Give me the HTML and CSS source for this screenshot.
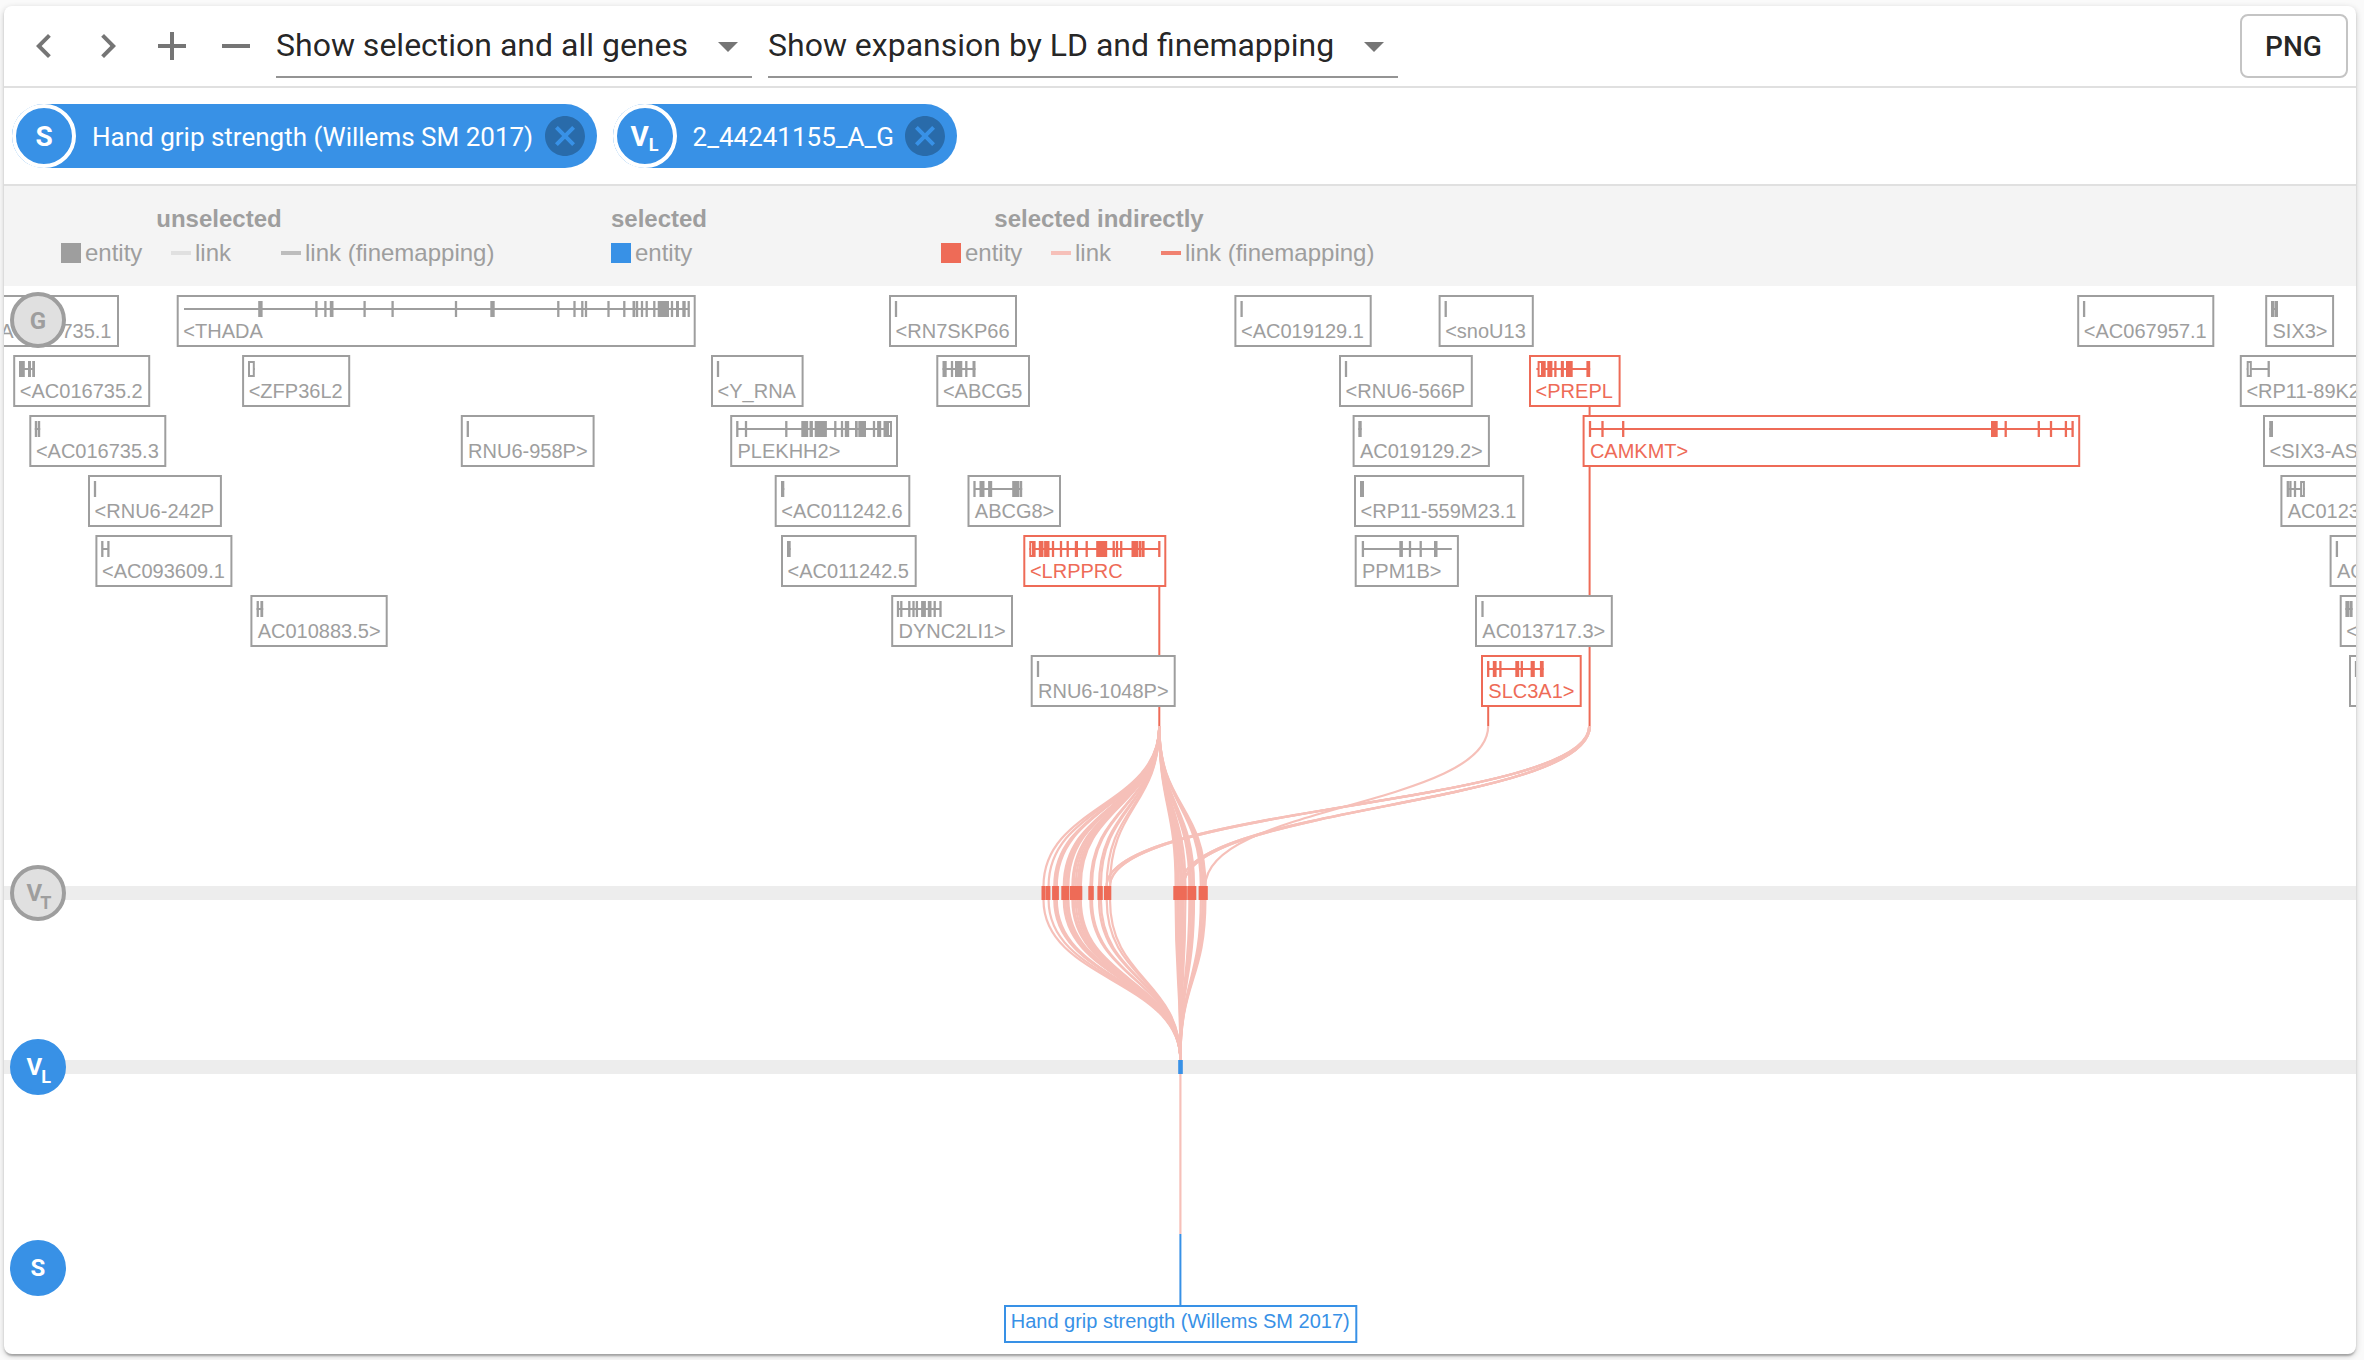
FILE: index.html
```html
<!DOCTYPE html>
<html lang="en">
<head>
<meta charset="utf-8">
<title>Locus browser</title>
<link rel="stylesheet" href="styles.css">
</head>
<body>
<main class="card">
  <header class="toolbar">
    <button class="icon-button" aria-label="Pan left"><svg viewBox="0 0 24 24"><path d="M15.41 7.41 14 6l-6 6 6 6 1.41-1.41L10.83 12z"/></svg></button>
    <button class="icon-button" aria-label="Pan right"><svg viewBox="0 0 24 24"><path d="M10 6 8.59 7.41 13.17 12l-4.58 4.59L10 18l6-6z"/></svg></button>
    <button class="icon-button" aria-label="Zoom in"><svg viewBox="0 0 24 24"><path d="M19 13h-6v6h-2v-6H5v-2h6V5h2v6h6v2z"/></svg></button>
    <button class="icon-button" aria-label="Zoom out"><svg viewBox="0 0 24 24"><path d="M19 13H5v-2h14v2z"/></svg></button>
    <div class="select select-genes"><span>Show selection and all genes</span><svg viewBox="0 0 24 24"><path d="M7 10l5 5 5-5z"/></svg></div>
    <div class="select select-expansion"><span>Show expansion by LD and finemapping</span><svg viewBox="0 0 24 24"><path d="M7 10l5 5 5-5z"/></svg></div>
    <button class="png-button">PNG</button>
  </header>
  <section class="chips">
    <div class="chip">
      <span class="avatar">S</span>
      <span class="chip-label">Hand grip strength (Willems SM 2017)</span>
      <svg class="chip-delete" viewBox="0 0 24 24"><path d="M12 2C6.47 2 2 6.47 2 12s4.47 10 10 10 10-4.47 10-10S17.53 2 12 2zm5 13.59L15.59 17 12 13.41 8.41 17 7 15.59 10.59 12 7 8.41 8.41 7 12 10.59 15.59 7 17 8.41 13.41 12 17 15.59z"/></svg>
    </div>
    <div class="chip">
      <span class="avatar">V<sub>L</sub></span>
      <span class="chip-label">2_44241155_A_G</span>
      <svg class="chip-delete" viewBox="0 0 24 24"><path d="M12 2C6.47 2 2 6.47 2 12s4.47 10 10 10 10-4.47 10-10S17.53 2 12 2zm5 13.59L15.59 17 12 13.41 8.41 17 7 15.59 10.59 12 7 8.41 8.41 7 12 10.59 15.59 7 17 8.41 13.41 12 17 15.59z"/></svg>
    </div>
  </section>
  <section class="legend">
    <div class="legend-group group-unselected">
      <h2>unselected</h2>
      <ul>
        <li><i class="box grey"></i>entity</li>
        <li><i class="dash grey-light"></i>link</li>
        <li><i class="dash grey-mid"></i>link (finemapping)</li>
      </ul>
    </div>
    <div class="legend-group group-selected">
      <h2>selected</h2>
      <ul>
        <li><i class="box blue"></i>entity</li>
      </ul>
    </div>
    <div class="legend-group group-indirect">
      <h2>selected indirectly</h2>
      <ul>
        <li><i class="box red"></i>entity</li>
        <li><i class="dash red-light"></i>link</li>
        <li><i class="dash red-mid"></i>link (finemapping)</li>
      </ul>
    </div>
  </section>
  <svg class="browser" viewBox="4 286 2352 1068">
    <g id="connectors" class="connectors"></g>
    <g id="genes"></g>
    <rect class="track" x="4" y="886" width="2352" height="14"/>
    <rect class="track" x="4" y="1060" width="2352" height="14"/>
    <g id="links" class="links"></g>
    <g id="variants" class="variants"></g>
    <rect class="lead" x="1178.2" y="1060" width="4.6" height="14"/>
    <line class="study-link" x1="1180.4" y1="1074" x2="1180.4" y2="1234"/>
    <line class="study-stem" x1="1180.4" y1="1234" x2="1180.4" y2="1306"/>
    <rect class="study-box" x="1005" y="1306" width="351.3" height="36"/>
    <text class="study-label" x="1010.7" y="1328">Hand grip strength (Willems SM 2017)</text>
    <g class="badge muted"><circle cx="38" cy="320" r="26"/><text x="38" y="328.5">G</text></g>
    <g class="badge muted"><circle cx="38" cy="893" r="26"/><text x="34.3" y="901">V</text><text class="sub" x="45.8" y="909">T</text></g>
    <g class="badge active"><circle cx="38" cy="1067" r="26"/><text x="34.3" y="1075">V</text><text class="sub" x="46" y="1083">L</text></g>
    <g class="badge active"><circle cx="38" cy="1268" r="26"/><text x="38" y="1276">S</text></g>
  </svg>
</main>
<script src="script.js"></script>
</body>
</html>
```
FILE: styles.css
```css
* { box-sizing: border-box; }

body {
  margin: 0;
  padding: 6px 8px 6px 4px;
  background: #fafafa;
  font-family: Roboto, sans-serif;
  overflow: hidden;
}

.card {
  height: 1348px;
  border-radius: 8px;
  background: #fff;
  overflow: hidden;
  box-shadow: 0 2px 6px rgba(0, 0, 0, .2), 0 2px 2px rgba(0, 0, 0, .14), 0 4px 2px -2px rgba(0, 0, 0, .12);
}

.toolbar {
  display: flex;
  align-items: center;
  height: 82px;
  padding: 0 8px;
  border-bottom: 2px solid #e0e0e0;
}

.icon-button {
  width: 64px;
  height: 64px;
  padding: 8px;
  border: 0;
  background: none;
}

.icon-button svg {
  display: block;
  width: 48px;
  height: 48px;
  fill: #757575;
}

.select {
  display: flex;
  justify-content: space-between;
  align-items: center;
  height: 64px;
  margin-right: 16px;
  border-bottom: 2px solid #949494;
  color: rgba(0, 0, 0, .87);
  font-size: 32px;
  line-height: 62px;
  white-space: nowrap;
}

.select-genes { width: 476px; margin-left: 8px; }
.select-expansion { width: 630px; }

.select svg {
  width: 48px;
  height: 48px;
  margin-top: 2px;
  fill: #757575;
}

.png-button {
  width: 108px;
  height: 64px;
  margin-left: auto;
  padding: 0 1px 0 0;
  border: 2px solid #c4c4c4;
  border-radius: 8px;
  background: #fff;
  color: rgba(0, 0, 0, .87);
  font: 500 28px Roboto, sans-serif;
}

.chips {
  display: flex;
  align-items: center;
  gap: 16px;
  height: 98px;
  padding: 0 8px;
  border-bottom: 2px solid #e0e0e0;
}

.chip {
  display: flex;
  align-items: center;
  height: 64px;
  padding-right: 8px;
  border-radius: 32px;
  background: #3891e6;
  color: #fff;
}

.avatar {
  display: flex;
  align-items: center;
  justify-content: center;
  width: 64px;
  height: 64px;
  border: 4px solid #fff;
  border-radius: 50%;
  font-size: 28px;
  font-weight: 700;
}

.avatar sub {
  margin-top: 16px;
  font-size: 18px;
  font-weight: 700;
  vertical-align: baseline;
}

.chip-label {
  margin: 1px 7.4px 0 16px;
  font-size: 26px;
  line-height: 32px;
  white-space: nowrap;
}

.chip-delete {
  width: 48px;
  height: 48px;
  fill: rgba(0, 0, 0, .26);
}

.legend {
  display: flex;
  height: 100px;
  padding: 18px 0 0 56px;
  background: #f4f4f4;
  color: #9e9e9e;
  font-family: "Liberation Sans", sans-serif;
  font-size: 24px;
}

.legend h2 {
  margin: 0;
  font-size: 24px;
  line-height: 30px;
  text-align: center;
  white-space: nowrap;
}

.legend-group { margin-right: 116px; }
.legend-group ul {
  display: flex;
  margin: 4px 0 0;
  padding: 0;
  list-style: none;
}
.legend-group li {
  display: flex;
  align-items: center;
  width: 110px;
  line-height: 30px;
  white-space: nowrap;
}
.group-unselected { width: 434px; }
.group-unselected h2 { width: 318px; }
.group-selected { width: 214px; }
.group-selected h2 { width: 98px; }
.group-indirect h2 { width: 318px; }

.box {
  flex: none;
  width: 20px;
  height: 20px;
  margin: 0 4.5px 0 .5px;
}
.dash {
  flex: none;
  width: 20px;
  height: 4px;
  margin: 0 4.5px 0 .5px;
}
.grey { background: #9e9e9e; }
.grey-light { background: #e0e0e0; }
.grey-mid { background: #bdbdbd; }
.blue { background: #3891e6; }
.red { background: #ee6b57; }
.red-light { background: #f6c0b9; }
.red-mid { background: #f08170; }

.browser {
  display: block;
  width: 2352px;
  height: 1068px;
  font-family: "Liberation Sans", sans-serif;
  font-size: 20px;
}

.gene .frame { fill: #fff; stroke-width: 2; }
.gene .intron { stroke-width: 2; }
.gene .hollow { fill: #fff; stroke-width: 2; }
.gene.normal .frame, .gene.normal .intron, .gene.normal .hollow { stroke: #9e9e9e; }
.gene.normal text, .gene.normal .exon { fill: #9e9e9e; }
.gene.linked .frame, .gene.linked .intron, .gene.linked .hollow { stroke: #ee6b57; }
.gene.linked text, .gene.linked .exon { fill: #ee6b57; }

.connectors line { stroke: #ee6b57; stroke-width: 2; }
.links path { fill: none; stroke: #f6c0b9; stroke-width: 2.2; }
.track { fill: #ededed; }
.variants rect { fill: #ee6b57; }
.lead { fill: #3891e6; }
.study-link { stroke: #f6c0b9; stroke-width: 2.2; }
.study-stem { stroke: #3891e6; stroke-width: 2; }
.study-box { fill: #fff; stroke: #3891e6; stroke-width: 2; }
.study-label { fill: #3891e6; }

.badge circle { stroke-width: 4; }
.badge text {
  font: 700 24px Roboto, sans-serif;
  text-anchor: middle;
}
.badge .sub { font-size: 18px; }
.muted circle { fill: #e0e0e0; stroke: #9e9e9e; }
.muted text { fill: #9e9e9e; }
.active circle { fill: #3891e6; stroke: #3891e6; }
.active text { fill: #fff; }
```
FILE: script.js
```js
// Each gene: row, left, right, label, exons, linked, intron start/end overrides.
// An exon is a number (thin exon centre), [start, end] (solid block)
// or [start, end, 1] (untranslated block, drawn as an outline).
const genes = [
  [0, -17, 118, '<AC016735.1', []],
  [0, 177.7, 694.7, '<THADA', [[258.2, 262.6], 316.4, 325.4, [329.8, 333.5], 364.6, 392.6, 456, [490.3, 494.7], 558.3, 574.5, 582.3, 586, 608.5, 624.3, [632.5, 635], [635.6, 638.2], 642, 646.7, 654.3, [657.7, 669], 672, [676, 679], [682.3, 685.7], 688.7], false, 184],
  [0, 890, 1016, '<RN7SKP66', [896]],
  [0, 1235.4, 1370.7, '<AC019129.1', [1241.6]],
  [0, 1439.6, 1532.8, '<snoU13', [1445.7]],
  [0, 2078.2, 2213.3, '<AC067957.1', [2084.1]],
  [0, 2266.2, 2333.1, 'SIX3>', [[2271, 2274.6], [2275, 2278]]],
  [1, 14.2, 149.2, '<AC016735.2', [[19, 24.8], [28, 31], [32.2, 35]]],
  [1, 243.1, 349.2, '<ZFP36L2', [[248, 254.8, 1]]],
  [1, 712, 802.6, '<Y_RNA', [718]],
  [1, 937.3, 1029, '<ABCG5', [[942.5, 946.7], 952, [955, 962.3], 966.3, [972.5, 975.5]]],
  [1, 1340, 1471.8, '<RNU6-566P', [1346]],
  [1, 1530, 1619.6, '<PREPL', [[1537.6, 1543, 1], [1541.8, 1545.7], [1547.3, 1552.4], 1555.4, [1560.8, 1563.9], [1566, 1572.7], [1586.4, 1590.2]], true, 1536.4],
  [1, 2240.8, 2420, '<RP11-89K21.1', [[2246.7, 2251.8, 1], 2268.7]],
  [2, 30.3, 165.3, '<AC016735.3', [[34.8, 37.2], [37.8, 40.2]]],
  [2, 461.8, 593.6, 'RNU6-958P>', [467.8]],
  [2, 731.2, 897, 'PLEKHH2>', [737.3, 746, 786.3, [801.3, 808.2], [809.5, 812.9], [814.7, 826.9], 835.3, 842, [844.8, 849.2], [855, 857.7], [858.3, 866], 874, [877.1, 881.2], [883.5, 888], [887, 892, 1]]],
  [2, 1353.6, 1488.9, 'AC019129.2>', [[1358.3, 1361.7]]],
  [2, 1583.6, 2079.2, 'CAMKMT>', [1590, 1602.5, 1623.2, [1991, 1997.7], 2005.7, 2038.8, 2051, 2065.9, 2072.6], true],
  [2, 2264, 2400, '<SIX3-AS1', [[2269.2, 2273]]],
  [3, 89, 220.9, '<RNU6-242P', [95]],
  [3, 775.7, 909.3, '<AC011242.6', [[781, 784.3]]],
  [3, 968.5, 1060, 'ABCG8>', [974.5, [979.5, 984.5], [988.1, 992.2], [1012.2, 1019.2], [1019.6, 1022.2]]],
  [3, 1355, 1523.2, '<RP11-559M23.1', [[1360, 1364]]],
  [3, 2281.4, 2420, 'AC012354.6>', [2287.8, 2290.4, 2295, [2300.1, 2304.9, 1]]],
  [4, 96.4, 231.4, '<AC093609.1', [102.3, 108.4]],
  [4, 782, 915.7, '<AC011242.5', [[787, 790.7]]],
  [4, 1024.3, 1165.3, '<LRPPRC', [[1029.3, 1034, 1], [1032.6, 1035.6], [1038.8, 1043.5], [1044.1, 1049.5], 1053, 1061, 1067.7, [1074.8, 1078], 1086.7, [1096.2, 1107.2], 1113.7, 1117, 1121.2, [1131.5, 1138.4], [1138.9, 1141.6], [1142, 1144.6], 1159.3], true],
  [4, 1355.7, 1457.9, 'PPM1B>', [1362.9, [1399.3, 1402.9], 1410, 1420.7, [1434, 1437.5]], false, 1362.5, 1451.8],
  [4, 2330.6, 2460, 'AC012354.8>', [2336.9]],
  [5, 251.4, 386.7, 'AC010883.5>', [[256.6, 258.9], [260.4, 263.2]]],
  [5, 892.2, 1012, 'DYNC2LI1>', [898, 901.3, 909.3, 913.5, 916.9, [921.1, 925.9], [927.8, 931.5], 934.7, 940.5]],
  [5, 1476, 1611.8, 'AC013717.3>', [1482.5]],
  [5, 2340.7, 2460, '<SIX2', [[2345.4, 2349], [2349.4, 2352.6]]],
  [6, 1031.7, 1174.7, 'RNU6-1048P>', [1038]],
  [6, 1482, 1580.7, 'SLC3A1>', [1488.2, [1492.8, 1496.6], 1500.4, [1515.3, 1519.2], 1521.8, [1530.6, 1534.8], [1539.9, 1543.7]], true],
  [6, 2350, 2480, '', [2356]]
];

const NS = 'http://www.w3.org/2000/svg';
function add(parent, tag, attrs, text) {
  const el = document.createElementNS(NS, tag);
  for (const key in attrs) el.setAttribute(key, attrs[key]);
  if (text) el.textContent = text;
  parent.appendChild(el);
  return el;
}

const geneLayer = document.getElementById('genes');
for (const [row, left, right, label, exons, linked, start, end] of genes) {
  const y = 296 + row * 60;
  const g = add(geneLayer, 'g', { class: 'gene ' + (linked ? 'linked' : 'normal') });
  add(g, 'rect', { class: 'frame', x: left, y, width: right - left, height: 50 });
  const edges = exons.flatMap(e => Array.isArray(e) ? e.slice(0, 2) : [e]);
  if (edges.length > 1) {
    add(g, 'line', { class: 'intron', x1: start || Math.min(...edges), x2: end || Math.max(...edges), y1: y + 13, y2: y + 13 });
  }
  for (const e of exons) {
    if (!Array.isArray(e)) {
      add(g, 'rect', { class: 'exon', x: e - 1.15, y: y + 5, width: 2.3, height: 16 });
    } else if (e[2]) {
      add(g, 'rect', { class: 'hollow', x: e[0] + 1, y: y + 6, width: e[1] - e[0] - 2, height: 14 });
    } else {
      add(g, 'rect', { class: 'exon', x: e[0], y: y + 5, width: e[1] - e[0], height: 16 });
    }
  }
  add(g, 'text', { x: left + (label.startsWith('<') ? 5.6 : 6.3), y: y + 42 }, label);
}

const connectors = document.getElementById('connectors');
for (const [x, y1] of [[1159.3, 586], [1589.6, 406], [1488.2, 706]]) {
  add(connectors, 'line', { x1: x, y1, x2: x, y2: 726 });
}

const links = document.getElementById('links');
function link(x1, y1, x2, y2) {
  const mid = (y1 + y2) / 2;
  add(links, 'path', { d: `M${x1} ${y1}C${x1} ${mid} ${x2} ${mid} ${x2} ${y2}` });
}
const positions = [1043.5, 1048.6, 1054.3, 1055.6, 1056.8, 1063.8, 1065.4, 1067, 1068.4, 1072.4, 1073.8, 1075.8, 1077.8, 1079.4, 1080.8, 1090.4, 1092, 1099, 1100.9, 1106.7, 1110,
  1175.6, 1177.2, 1178.8, 1180.4, 1182, 1183.6, 1185.4, 1189.4, 1191, 1192.6, 1194, 1200.8, 1202.4, 1204, 1205.4];
for (const x of positions) {
  link(1159.3, 726, x, 886);
  link(x, 900, 1180.4, 1060);
}
for (const x of [1106.7, 1110, 1180.4, 1183.6]) {
  link(1589.2, 726, x, 886);
  link(1590, 726, x, 886);
}
link(1488.2, 726, 1205.4, 886);

const variants = document.getElementById('variants');
for (const [a, b] of [[1041.5, 1045.7], [1046, 1050.4], [1052.1, 1058.9], [1061.3, 1069.4], [1070, 1082.3], [1088.3, 1093.8], [1097.4, 1102.8], [1103.9, 1111.3], [1173.3, 1186.9], [1187.3, 1196.3], [1198.6, 1207.8]]) {
  add(variants, 'rect', { x: a, y: 886, width: b - a, height: 14 });
}
```
